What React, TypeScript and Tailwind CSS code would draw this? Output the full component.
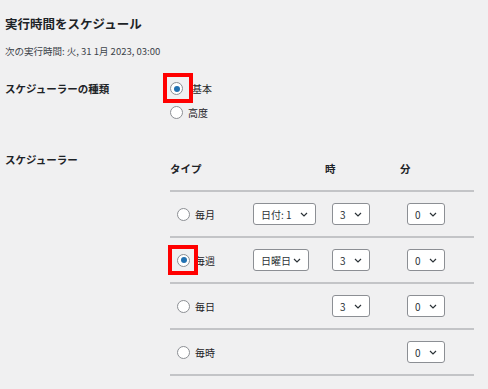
import React from 'react';

const font = { fontFamily: '"Noto Sans CJK JP", "Noto Sans", sans-serif' };

function Radio({ checked, mark }: { checked?: boolean; mark?: string }) {
    return (
        <span className="relative inline-flex h-[13px] w-[13px] shrink-0 items-center justify-center rounded-full border border-[#8c8f94] bg-white">
            {checked && <span className="h-[6px] w-[6px] rounded-full bg-[#2271b1]" />}
            {/* annotation box */}
            {mark && <span className={`absolute h-[30px] w-[30px] border-4 border-[#ff0000] ${mark}`} />}
        </span>
    );
}

function Select({ label, width }: { label: string; width: string }) {
    return (
        <div className={`flex h-[22px] ${width} items-center justify-between rounded-[3px] border border-[#8c8f94] bg-white pl-[7px] pr-[7px] text-[10px] text-[#2c3338]`}>
            <span>{label}</span>
            <svg width="8" height="5" viewBox="0 0 8 5" fill="none">
                <path d="M1 1l3 3 3-3" stroke="#2c3338" strokeWidth="1.2" />
            </svg>
        </div>
    );
}

const rows = [
    { type: '毎月', day: '日付: 1', dayW: 'w-[63px]', hour: true },
    { type: '毎週', day: '日曜日', dayW: 'w-[56px]', hour: true, checked: true },
    { type: '毎日', hour: true },
    { type: '毎時' },
];

export default function App() {
    return (
        <div className="h-[389px] w-[488px] bg-[#f0f0f1] pl-[5px] text-[#1d2327]" style={font}>
            <h2 className="pt-[15px] text-[12.5px] font-bold leading-[18px]">実行時間をスケジュール</h2>
            <p className="mt-[12px] text-[9.5px] leading-[12px] text-[#3c434a]">次の実行時間: 火, 31 1月 2023, 03:00</p>

            <div className="mt-[25px] flex">
                <div className="w-[165px] text-[10.5px] font-bold leading-[14px]">スケジューラーの種類</div>
                <div className="flex flex-col gap-[11px]">
                    <label className="flex items-center gap-[9px] text-[10px] leading-[13px]">
                        <Radio checked mark="-left-[8px] -top-[10px]" />
                        <span>基本</span>
                    </label>
                    <label className="flex items-center gap-[5px] text-[10px] leading-[13px]">
                        <Radio />
                        <span>高度</span>
                    </label>
                </div>
            </div>

            <div className="mt-[34px] flex">
                <div className="w-[165px] text-[10.5px] font-bold leading-[14px]">スケジューラー</div>
                <div className="mt-[9px] w-[304px]">
                    <div className="flex h-[30px] border-b-2 border-[#c3c4c7] text-[10.5px] font-bold leading-[14px]">
                        <div className="w-[155px]">タイプ</div>
                        <div className="w-[75px]">時</div>
                        <div>分</div>
                    </div>
                    {rows.map((r) => (
                        <div key={r.type} className="flex h-[46px] items-center border-b-2 border-[#c3c4c7] text-[10px]">
                            <label className="flex w-[83px] items-center gap-[5px] pl-[7px]">
                                <Radio checked={r.checked} mark={r.checked ? '-left-[10px] -top-[10px]' : undefined} />
                                <span>{r.type}</span>
                            </label>
                            <div className="w-[79px]">{r.day && <Select label={r.day} width={r.dayW!} />}</div>
                            <div className="w-[75px]">{r.hour && <Select label="3" width="w-[38px]" />}</div>
                            <div>
                                <Select label="0" width="w-[38px]" />
                            </div>
                        </div>
                    ))}
                </div>
            </div>
        </div>
    );
}
